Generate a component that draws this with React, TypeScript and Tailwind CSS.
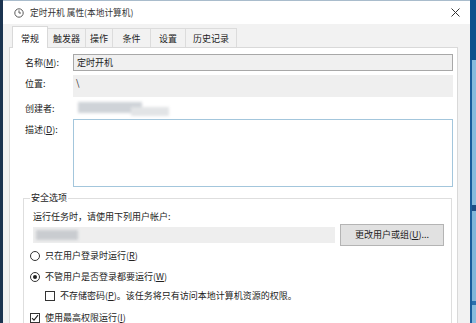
function ClockIcon() {
  return (
    <svg width="10" height="10" viewBox="0 0 10 10" fill="none" stroke="#5a5a5a" strokeWidth="1">
      <circle cx="5" cy="5" r="4.2" />
      <path d="M5 2.4V5h2" />
    </svg>
  );
}

function CloseIcon() {
  return (
    <svg width="9" height="9" viewBox="0 0 9 9" stroke="#333" strokeWidth="1">
      <path d="M0.5 0.5l8 8M8.5 0.5l-8 8" />
    </svg>
  );
}

function Radio({ checked }: { checked?: boolean }) {
  return (
    <span className="w-[10px] h-[10px] rounded-full border border-[#333] bg-white flex items-center justify-center">
      {checked && <span className="w-[4px] h-[4px] rounded-full bg-[#222]" />}
    </span>
  );
}

function Check({ checked }: { checked?: boolean }) {
  return (
    <span className="w-[10px] h-[10px] border border-[#333] bg-white flex items-center justify-center">
      {checked && (
        <svg width="8" height="8" viewBox="0 0 8 8" fill="none" stroke="#222" strokeWidth="1.1">
          <path d="M1 4.2l2 2 4-5" />
        </svg>
      )}
    </span>
  );
}

const tabs = [
  { label: '触发器', w: 'w-[38px]' },
  { label: '操作', w: 'w-[27px]' },
  { label: '条件', w: 'w-[38px]' },
  { label: '设置', w: 'w-[35px]' },
  { label: '历史记录', w: 'w-[51px]' },
];

export default function App() {
  return (
    <div className="w-[476px] h-[323px] overflow-hidden flex items-start bg-[#1a5d9b] font-['Noto_Sans_CJK_SC',sans-serif] text-[9px] text-[#222]">
      <div className="w-[3px] h-[323px] bg-[#1b3450]" />

      {/* window */}
      <div className="w-[467px] h-[345px] flex flex-col bg-[#f2f2f2]">
        <div className="h-[24px] shrink-0 bg-white border-t border-[#a9bccc] flex items-center pl-[11px] pr-[10px]">
          <ClockIcon />
          <span className="ml-[6px] leading-[12px] text-[8.7px] text-[#333]">定时开机 属性(本地计算机)</span>
          <span className="ml-auto flex">
            <CloseIcon />
          </span>
        </div>

        <div className="flex-1 flex flex-col pl-[6px] pr-[12px] pt-[2px]">
          {/* tabs */}
          <div className="h-[21px] shrink-0 flex items-end pl-[3px]">
            <div className="w-[36px] h-[22px] -mb-px relative z-10 bg-white border border-b-0 border-[#d9d9d9] pt-[6px] leading-[12px] text-center">
              常规
            </div>
            {tabs.map((t) => (
              <div
                key={t.label}
                className={`${t.w} h-[19px] border border-l-0 border-b-0 border-[#dcdcdc] pt-[4px] leading-[12px] text-center`}
              >
                {t.label}
              </div>
            ))}
          </div>

          {/* panel */}
          <div className="flex-1 flex flex-col border border-[#d9d9d9] bg-white pl-[15px] pr-[4px]">
            <div className="mt-[6px] h-[17px] flex items-center">
              <span className="w-[48px] leading-[12px]">
                名称(<u>M</u>):
              </span>
              <div className="flex-1 h-[17px] border border-[#a8a8a8] bg-[#f0f0f0] pl-[3px] leading-[15px]">定时开机</div>
            </div>

            <div className="mt-[4px] h-[22px] flex items-start">
              <span className="w-[48px] pt-[3px] leading-[12px]">位置:</span>
              <div className="flex-1 h-[22px] bg-[#efefef] pl-[3px] pt-[2px] leading-[12px]">\</div>
            </div>

            <div className="mt-[3px] h-[18px] flex items-center">
              <span className="w-[48px] leading-[12px]">创建者:</span>
              <div className="relative w-[100px] h-[18px]">
                <div className="absolute left-[5px] top-[2px] w-[64px] h-[11px] bg-[#cfd3d8] blur-[1.5px]" />
                <div className="absolute left-[58px] top-[7px] w-[38px] h-[9px] bg-[#e2e4e6] blur-[1.5px]" />
              </div>
            </div>

            <div className="mt-px h-[68px] flex items-start">
              <span className="w-[48px] pt-[5px] leading-[12px]">
                描述(<u>D</u>):
              </span>
              <div className="flex-1 h-[68px] border border-[#a3c6dc] bg-white" />
            </div>

            <fieldset className="mt-[5px] -ml-[2px] mr-px flex-1 border border-[#dedede] pl-[6px]">
              <legend className="px-px leading-[12px]">安全选项</legend>
              <div className="mt-[7px] pl-[3px] leading-[12px]">运行任务时，请使用下列用户帐户:</div>

              <div className="mt-px h-[22px] pl-[3px] flex items-center">
                <div className="relative w-[302px] h-[16px] bg-[#eeeeee]">
                  <div className="absolute left-[3px] top-[3px] w-[42px] h-[10px] bg-[#c9ccd0] blur-[1.5px]" />
                </div>
                <div className="ml-[5px] w-[104px] h-[22px] border border-[#b4b4b4] bg-[#e1e1e1] flex items-center justify-center leading-[12px]">
                  更改用户或组(<u>U</u>)...
                </div>
              </div>

              <div className="mt-[3px] h-[14px] flex items-center gap-[5px]">
                <Radio />
                <span className="leading-[12px]">
                  只在用户登录时运行(<u>R</u>)
                </span>
              </div>

              <div className="mt-[7px] h-[14px] flex items-center gap-[5px]">
                <Radio checked />
                <span className="leading-[12px]">
                  不管用户是否登录都要运行(<u>W</u>)
                </span>
              </div>

              <div className="mt-[5px] h-[14px] pl-[15px] flex items-center gap-[5px]">
                <Check />
                <span className="leading-[12px]">
                  不存储密码(<u>P</u>)。该任务将只有访问本地计算机资源的权限。
                </span>
              </div>

              <div className="mt-[8px] h-[14px] flex items-center gap-[5px]">
                <Check checked />
                <span className="leading-[12px]">
                  使用最高权限运行(<u>I</u>)
                </span>
              </div>
            </fieldset>
          </div>
        </div>
      </div>

      {/* desktop behind */}
      <div className="w-[6px] h-[323px] flex flex-col">
        <div className="h-[60px] bg-[#0f4f8c]" />
        <div className="flex-1 flex flex-col pl-[2px] bg-[#1a5d9b]">
          <div className="h-[145px] bg-[#86bbdd]" />
          <div className="h-[6px] bg-[#1b4f86]" />
          <div className="h-[90px] bg-[#7fb6da]" />
          <div className="h-[4px] bg-[#2a6fae]" />
          <div className="flex-1 bg-[#86bbdd]" />
        </div>
      </div>
    </div>
  );
}
